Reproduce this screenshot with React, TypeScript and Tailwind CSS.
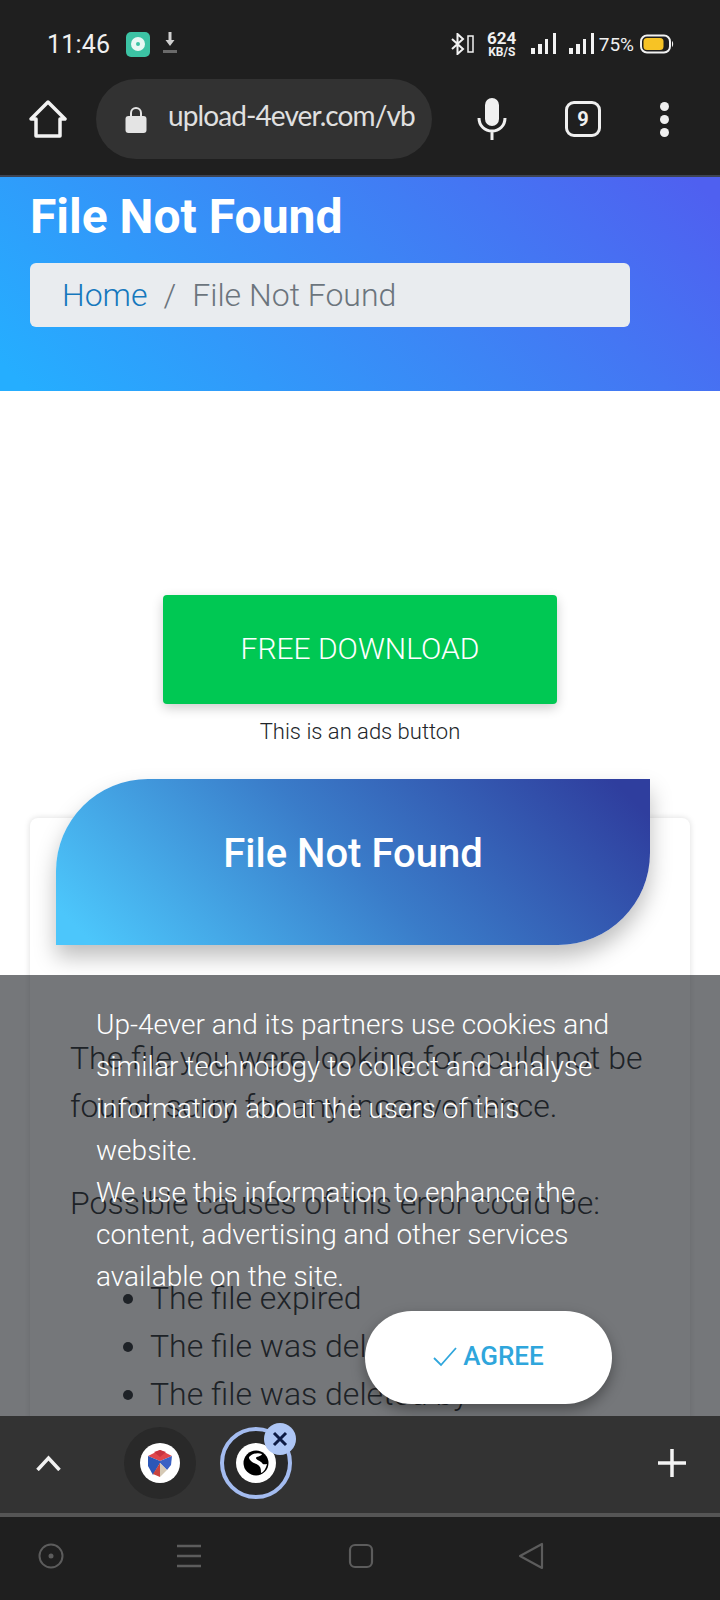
import React from "react";

const Signal = () => (
  <svg width="26" height="22" viewBox="0 0 26 22" fill="#f2f2f2">
    <rect x="0" y="15" width="4" height="6" />
    <rect x="7" y="11" width="4" height="10" />
    <rect x="14" y="6" width="3" height="15" />
    <rect x="22" y="0" width="3" height="21" />
  </svg>
);

function StatusBar() {
  return (
    <div className="flex h-[80px] items-center pl-[47px] pr-[46px] pt-[8px] text-[#f0f0f0]">
      <span className="w-[62px] text-[25px] tracking-[0.2px] leading-none">11:46</span>
      <div className="ml-[17px] flex h-[25px] w-[24px] items-center justify-center rounded-[5px] bg-[#3cc3a4]">
        <div className="flex h-[14px] w-[14px] items-center justify-center rounded-full bg-[#e8f8f4]">
          <div className="h-[4px] w-[4px] rounded-full bg-[#3cc3a4]" />
        </div>
      </div>
      <svg className="ml-[12px]" width="16" height="24" viewBox="0 0 16 24">
        <path d="M6.500 0h3v8h3L8 14 3.500 8h3z" fill="#d0d0d0" />
        <rect x="1" y="18" width="14" height="3" fill="#6a6a6a" />
      </svg>
      <svg className="ml-auto" width="25" height="22" viewBox="0 0 25 22" fill="none" stroke="#f2f2f2" strokeWidth="2">
        <path d="M2 6l11 10-5.500 5V1L13 6 2 16" />
        <rect x="18" y="3" width="5" height="16" strokeWidth="1.500" />
      </svg>
      <div className="ml-[12px] flex w-[30px] flex-col items-center font-bold leading-none">
        <span className="text-[17px] leading-[15px]">624</span>
        <span className="text-[12px] leading-[12px]">KB/S</span>
      </div>
      <div className="ml-[14px]"><Signal /></div>
      <div className="ml-[12px]"><Signal /></div>
      <span className="ml-[4px] text-[19px] leading-none">75%</span>
      <svg className="ml-[6px]" width="34" height="20" viewBox="0 0 34 20">
        <rect x="1" y="1.500" width="29" height="17" rx="6" fill="none" stroke="#f2f2f2" strokeWidth="2" />
        <rect x="3.500" y="4" width="20" height="12" rx="3.500" fill="#f7c325" />
        <path d="M32 7c1.500 1 1.500 5 0 6z" fill="#f2f2f2" />
      </svg>
    </div>
  );
}

function Toolbar() {
  return (
    <div className="flex h-[97px] items-center border-b-2 border-[#3d4352] pb-[17px]">
      <svg className="ml-[29px]" width="38" height="38" viewBox="0 0 38 38" fill="none" stroke="#f2f2f2" strokeWidth="3.500" strokeLinejoin="round">
        <path d="M2 19 19 2l17 17h-5v17H7V19z" />
      </svg>
      <div className="ml-[29px] flex h-[80px] w-[336px] items-center rounded-full bg-[#323232] pl-[29px] pr-[17px]">
        <svg width="22" height="27" viewBox="0 0 22 27" className="shrink-0">
          <path d="M6 11V7a5 5 0 0 1 10 0v4" fill="none" stroke="#e4e4e4" strokeWidth="2" />
          <rect x="0.500" y="10" width="21" height="17" rx="3" fill="#e4e4e4" />
        </svg>
        <div className="mb-[8px] ml-[21px] overflow-hidden whitespace-nowrap font-['Lato',sans-serif] text-[28px] tracking-[-0.9px] text-[#e0e0e0]">upload-4ever.com/vbi</div>
      </div>
      <svg className="ml-[45px]" width="30" height="42" viewBox="0 0 30 42" fill="none">
        <rect x="8" y="0" width="14" height="28" rx="7" fill="#f0f0f0" />
        <path d="M2 20c0 8 6 13 13 13s13-5 13-13M15 33v9" stroke="#f0f0f0" strokeWidth="3" />
      </svg>
      <div className="ml-[58px] flex h-[36px] w-[36px] items-center justify-center rounded-[9px] border-[3px] border-[#efefef] text-[20px] font-bold leading-none text-[#efefef]">9</div>
      <div className="ml-[59px] flex flex-col gap-[4px]">
        <div className="h-[9px] w-[9px] rounded-full bg-[#efefef]" />
        <div className="h-[9px] w-[9px] rounded-full bg-[#efefef]" />
        <div className="h-[9px] w-[9px] rounded-full bg-[#efefef]" />
      </div>
    </div>
  );
}

function Page() {
  return (
    <div className="bg-white font-['Roboto',sans-serif] font-light text-[#212529]">
      <div className="h-[214px] bg-[linear-gradient(45deg,#25aeff_3%,#3d84f5_55%,#4f60f0_97%)] px-[30px] pt-[10px]">
        <h1 className="text-[48px] font-bold leading-[60px] text-white">File Not Found</h1>
        <div className="mt-[16px] flex h-[64px] w-[600px] items-center rounded-[6px] bg-[#e9ecef] px-[32px] text-[32px] font-light text-[#6c757d]">
          <span className="text-[#1678bd]">Home</span>
          <span className="mx-[16px]">/</span>
          <span>File Not Found</span>
        </div>
      </div>
      <div className="mx-auto mt-[204px] flex h-[109px] w-[394px] items-center justify-center rounded-[4px] bg-[#00c853] pb-[2px] text-[30px] text-white shadow-[0_4px_12px_rgba(0,0,0,0.2)]">FREE DOWNLOAD</div>
      <p className="mt-[14px] text-center text-[22px] leading-[28px]">This is an ads button</p>
      <div className="mx-[30px] mt-[72px] flow-root rounded-[8px] bg-white pb-[40px] shadow-[0_0_6px_rgba(0,0,0,0.14)]">
        <div className="-mt-[39px] ml-[26px] flex h-[166px] w-[594px] items-center justify-center rounded-br-[92px] rounded-tl-[92px] bg-[linear-gradient(45deg,#4cc6fb_5%,#3a7cc9_50%,#2f3e9e_95%)] pb-[16px] text-[40px] font-medium text-white shadow-[0_12px_22px_rgba(0,0,0,0.26)]">File Not Found</div>
        <div className="px-[40px] pt-[89px] text-[32px] leading-[48px]">
          <p>The file you were looking for could not be found, sorry for any inconvenience.</p>
          <p className="mt-[49px]">Possible causes of this error could be:</p>
          <ul className="mt-[47px] list-disc pl-[80px]">
            <li>The file expired</li>
            <li>The file was deleted by its owner</li>
            <li>The file was deleted by administration</li>
          </ul>
        </div>
      </div>
    </div>
  );
}

function CookieOverlay() {
  return (
    <div className="absolute inset-x-0 bottom-0 top-[798px] bg-[rgba(30,32,38,0.61)] pl-[96px] pr-[108px] pt-[29px] font-['Roboto',sans-serif] font-light text-white">
      <p className="text-[28px] leading-[42px]">
        Up-4ever and its partners use cookies and similar technology to collect and analyse information about the users of this website.
        <br />
        We use this information to enhance the content, advertising and other services available on the site.
      </p>
      <div className="absolute left-[365px] top-[336px] flex h-[93px] w-[247px] items-center justify-center gap-[6px] rounded-full bg-white pb-[2px] text-[26px] text-[#2fa6dc] shadow-[0_6px_14px_rgba(0,0,0,0.35)]">
        <svg width="24" height="20" viewBox="0 0 24 20" fill="none" stroke="#2fa6dc" strokeWidth="1.800">
          <path d="M1 11l7 7L23 1" />
        </svg>
        <span className="font-medium">AGREE</span>
      </div>
    </div>
  );
}

function TabStrip() {
  return (
    <div className="flex h-[101px] items-center border-b-[4px] border-[#555] bg-[#333] pb-[3px]">
      <svg className="ml-[36px]" width="25" height="16" viewBox="0 0 25 16" fill="none" stroke="#f2f2f2" strokeWidth="3.500">
        <path d="M1.500 15 12.500 3l11 12" />
      </svg>
      <div className="ml-[63px] flex h-[72px] w-[72px] items-center justify-center rounded-full bg-[#292929]">
        <div className="flex h-[40px] w-[40px] items-center justify-center rounded-full bg-white">
          <svg width="30" height="30" viewBox="0 0 30 30">
            <path d="M3 8 15 2l12 6-12 5z" fill="#e0474c" />
            <path d="M9 4l6 5 6-5-6-2z" fill="#c9343f" />
            <path d="M3 8l12 5v2L8 27 3 18z" fill="#2c57b8" />
            <path d="M27 8 15 13v2l7 7 4-5z" fill="#3a61c4" />
            <path d="M15 15l7 7-7 7z" fill="#d5c9b5" />
            <path d="M15 15v14l-7-3z" fill="#c9443f" />
          </svg>
        </div>
      </div>
      <div className="relative ml-[24px] flex h-[72px] w-[72px] items-center justify-center rounded-full border-[4px] border-[#a4bcf0] bg-[#292929]">
        <div className="flex h-[40px] w-[40px] items-center justify-center rounded-full bg-white">
          <svg width="26" height="26" viewBox="0 0 26 26">
            <circle cx="13" cy="13" r="12.500" fill="#000" />
            <path d="M6 7c3-3 8-5 13-3-1 3-6 2-6 4s5 3 6 5 3 1 5 1c-1 4-3 8-6 9 0-3 0-6-3-8s-5-2-7-4-2-3-2-4z" fill="#fff" />
          </svg>
        </div>
        <div className="absolute -right-[8px] -top-[8px] flex h-[32px] w-[32px] items-center justify-center rounded-full bg-[#aec6f5]">
          <svg width="16" height="16" viewBox="0 0 16 16" fill="none" stroke="#0e1b45" strokeWidth="3">
            <path d="M2 2l12 12M14 2 2 14" />
          </svg>
        </div>
      </div>
      <svg className="ml-auto mr-[34px]" width="28" height="28" viewBox="0 0 28 28" fill="none" stroke="#f4f4f4" strokeWidth="3.500">
        <path d="M14 0v28M0 14h28" />
      </svg>
    </div>
  );
}

function NavBar() {
  return (
    <div className="flex h-[83px] items-center bg-[#1f1f1f] pb-[6px]">
      <svg className="ml-[38px]" width="26" height="26" viewBox="0 0 26 26" fill="none" stroke="#5c5c5c" strokeWidth="2">
        <circle cx="13" cy="13" r="11.500" />
        <circle cx="13" cy="13" r="2.500" fill="#5c5c5c" stroke="none" />
      </svg>
      <svg className="ml-[112px]" width="26" height="24" viewBox="0 0 26 24" stroke="#5c5c5c" strokeWidth="2.500">
        <path d="M1 2h24M1 12h24M1 22h24" />
      </svg>
      <svg className="ml-[146px]" width="26" height="26" viewBox="0 0 26 26" fill="none" stroke="#5c5c5c" strokeWidth="2.200">
        <rect x="2" y="2" width="22" height="22" rx="5" />
      </svg>
      <svg className="ml-[144px]" width="26" height="28" viewBox="0 0 26 28" fill="none" stroke="#5c5c5c" strokeWidth="2.200" strokeLinejoin="round">
        <path d="M24 2v24L2 14z" />
      </svg>
    </div>
  );
}

export default function App() {
  return (
    <div className="flex h-[1600px] w-[720px] flex-col overflow-hidden bg-[#1f1f1f] font-['Roboto',sans-serif]">
      <StatusBar />
      <Toolbar />
      <div className="relative min-h-0 flex-1 overflow-hidden">
        <Page />
        <CookieOverlay />
      </div>
      <TabStrip />
      <NavBar />
    </div>
  );
}
